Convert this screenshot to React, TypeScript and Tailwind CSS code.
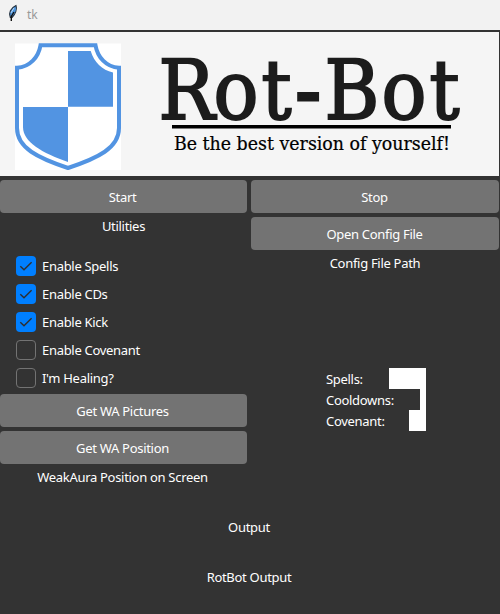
import type { ReactNode } from "react";

function Button({ children, side }: { children: ReactNode; side: "left" | "right" }) {
  return (
    <button
      className={`block h-[33px] bg-[#737373] text-center leading-[34px] ${
        side === "left" ? "w-[247px] rounded-[4px] pr-0.5" : "w-[248px] rounded-[4px] pr-px"
      }`}
    >
      {children}
    </button>
  );
}

function Check({ label, checked }: { label: string; checked: boolean }) {
  return (
    <label className="flex h-7 items-center gap-1.5">
      <span
        className={`flex size-5 items-center justify-center rounded-[4px] ${
          checked ? "bg-[#007fff]" : "border border-[#737373]"
        }`}
      >
        {checked && (
          <svg width="20" height="20" viewBox="0 0 20 20" fill="none" stroke="#2f2f2f" strokeWidth="1.4">
            <path d="M4.300 10.200 8 13.800 15.600 6.300" />
          </svg>
        )}
      </span>
      <span className="leading-5">{label}</span>
    </label>
  );
}

function Banner() {
  return (
    <svg width="499" height="144" viewBox="0 32 499 144" className="block bg-[#f5f5f5] tracking-normal">
      <rect x="15" y="43.5" width="106" height="126.5" fill="#fff" />
      <path
        d="M40.500 45.300H95.500C97.500 57 106 67 119 67.700V128C119 148 98 158 68 168C38 158 17 148 17 128V67.700C30 67 38.500 57 40.500 45.300Z"
        fill="#fff"
        stroke="#5294e2"
        strokeWidth="4"
      />
      <path d="M68 51H90.700C94 62 102 70 113 72.500V106.700H68Z" fill="#5294e2" />
      <path d="M23 107H68V162C42 153 23 142 23 127Z" fill="#5294e2" />
      <text
        y="118.8"
        x="158.5 213.5 261.5 295.5 324.5 381.5 429.5"
        fontSize="83"
        fill="#1c1c1c"
        stroke="#1c1c1c"
        strokeWidth="2"
        fontFamily="DejaVu Serif Condensed, DejaVu Serif, serif"
      >
        Rot<tspan strokeWidth="3.2">-</tspan>Bot
      </text>
      <rect x="172" y="125" width="279" height="3.5" fill="#000" />
      <text
        y="150"
        x="174"
        textLength="276"
        lengthAdjust="spacingAndGlyphs"
        fontSize="18.5"
        fill="#000"
        stroke="#000"
        strokeWidth="0.2"
        fontFamily="DejaVu Serif Condensed, DejaVu Serif, serif"
      >
        Be the best version of yourself!
      </text>
    </svg>
  );
}

const stats = [
  { label: "Spells:", box: "w-[37px]" },
  { label: "Cooldowns:", box: "w-[6px]" },
  { label: "Covenant:", box: "w-[17px]" },
];

export default function App() {
  return (
    <div className="h-[614px] w-[500px] overflow-hidden bg-[#333333] font-['Noto_Sans',sans-serif] text-[13px] tracking-[-0.3px] text-white">
      <header className="flex h-[30px] items-center bg-[#f2f2f2] pl-2 text-xs tracking-normal text-[#999]">
        <svg width="11" height="18" viewBox="0 0 11 18" className="mr-2 -mt-1">
          <path d="M2.300 13.500C.4 9 2.500 4 8 1.500 9.300 5 7.500 10 4 13.500Z" fill="#4b93dc" stroke="#26313c" strokeWidth="1.100" />
          <path d="M3.300 17V12.500L6 8" stroke="#111" fill="none" strokeWidth="1.400" />
          <path d="M2.900 9 6 4" stroke="#bddbf5" fill="none" strokeWidth="1" />
        </svg>
        <span>tk</span>
      </header>
      <div className="pt-0.5">
        <Banner />
      </div>
      <main className="flex pt-1">
        <section className="w-[251px]">
          <Button side="left">Start</Button>
          <p className="w-[247px] pt-[3px] text-center leading-5">Utilities</p>
          <div className="pt-4 pl-4">
            <Check label="Enable Spells" checked />
            <Check label="Enable CDs" checked />
            <Check label="Enable Kick" checked />
            <Check label="Enable Covenant" checked={false} />
            <Check label="I'm Healing?" checked={false} />
          </div>
          <div className="flex flex-col gap-1 pt-0.5">
            <Button side="left">Get WA Pictures</Button>
            <Button side="left">Get WA Position</Button>
          </div>
          <p className="w-[245px] pt-[3px] text-center leading-5">WeakAura Position on Screen</p>
        </section>
        <section className="w-[249px]">
          <div className="flex flex-col gap-1">
            <Button side="right">Stop</Button>
            <Button side="right">Open Config File</Button>
          </div>
          <p className="w-[248px] pt-[3px] text-center leading-5">Config File Path</p>
          <div className="ml-[75px] w-[100px] pt-[95px]">
            {stats.map((s) => (
              <div key={s.label} className="flex h-[21px] justify-between leading-[23px]">
                <span>{s.label}</span>
                <span className={`h-[21px] bg-white ${s.box}`} />
              </div>
            ))}
          </div>
        </section>
      </main>
      <footer className="w-[498px] pt-[30px] text-center leading-5">
        <p>Output</p>
        <p className="pt-[30px]">RotBot Output</p>
      </footer>
    </div>
  );
}
